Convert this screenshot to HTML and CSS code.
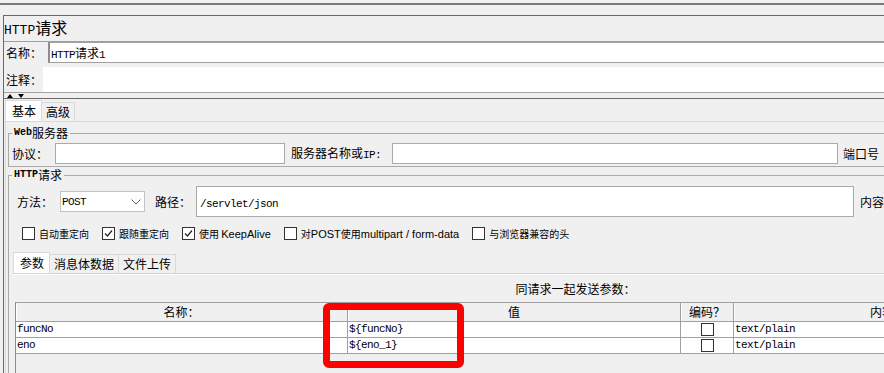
FILE: index.html
```html
<!DOCTYPE html>
<html lang="zh-CN">
<head>
    <meta charset="UTF-8">
    <meta name="viewport" content="width=device-width, initial-scale=1.0">
    <title>HTTP请求</title>
    <link rel="stylesheet" href="styles.css">
</head>
<body>
<div class="app">
    <div class="topbar"></div>
    <div class="panel">
        <div class="title"><span class="m">HTTP</span>请求</div>
        <div class="name-row">
            <span class="lbl">名称：</span>
            <div class="name-field"><span class="m">HTTP</span>请求<span class="m">1</span></div>
        </div>
        <div class="note-row">
            <span class="lbl">注释：</span>
            <div class="note"></div>
        </div>
        <div class="splitter">
            <svg width="20" height="4" viewBox="0 0 20 4"><polygon points="0,4 3,0 6,4" fill="#000"/><polygon points="11,0 17,0 14,4" fill="#000"/></svg>
        </div>
        <div class="tabs">
            <span class="tab on">基本</span>
            <span class="tab">高级</span>
        </div>
        <div class="pane">
            <fieldset class="group">
                <legend><span class="lg">Web</span>服务器</legend>
                <div class="row web-row">
                    <span>协议：</span>
                    <div class="input proto"></div>
                    <span class="host-lbl">服务器名称或<span class="m">IP:</span></span>
                    <div class="input host"></div>
                    <span class="port-lbl">端口号</span>
                    <div class="input port"></div>
                </div>
            </fieldset>
            <fieldset class="group">
                <legend><span class="lg">HTTP</span>请求</legend>
                <div class="row method-row">
                    <span>方法：</span>
                    <div class="select">
                        <span class="m">POST</span>
                        <svg width="10" height="6" viewBox="0 0 10 6"><polyline points="0.5,0.5 5,5 9.5,0.5" fill="none" stroke="#606060" stroke-width="1"/></svg>
                    </div>
                    <span class="path-lbl">路径：</span>
                    <div class="input path"><span class="m">/servlet/json</span></div>
                    <span class="enc-lbl">内容编码：</span>
                    <div class="input enc"></div>
                </div>
                <div class="checks">
                    <span class="check"><span class="box"></span><span>自动重定向</span></span>
                    <span class="check"><span class="box"><svg width="11" height="11" viewBox="0 0 11 11"><polyline points="2,5.5 4.5,8 9,2.5" fill="none" stroke="#222" stroke-width="1.2"/></svg></span><span>跟随重定向</span></span>
                    <span class="check"><span class="box"><svg width="11" height="11" viewBox="0 0 11 11"><polyline points="2,5.5 4.5,8 9,2.5" fill="none" stroke="#222" stroke-width="1.2"/></svg></span><span>使用 <span class="lat">KeepAlive</span></span></span>
                    <span class="check"><span class="box"></span><span>对<span class="lat">POST</span>使用<span class="lat">multipart / form-data</span></span></span>
                    <span class="check"><span class="box"></span><span>与浏览器兼容的头</span></span>
                </div>
                <div class="tabs inner">
                    <span class="tab on">参数</span>
                    <span class="tab">消息体数据</span>
                    <span class="tab">文件上传</span>
                </div>
                <div class="subpane">
                    <div class="caption">同请求一起发送参数：</div>
                    <div class="grid">
                        <div class="th">名称：</div>
                        <div class="th">值</div>
                        <div class="th">编码？</div>
                        <div class="th">内容类型：</div>
                        <div class="th">包含等于？</div>

                        <div class="td m">funcNo</div>
                        <div class="td m">${funcNo}</div>
                        <div class="td mid"><span class="box"></span></div>
                        <div class="td m">text/plain</div>
                        <div class="td mid"><span class="box"></span></div>

                        <div class="td m">eno</div>
                        <div class="td m">${eno_1}</div>
                        <div class="td mid"><span class="box"></span></div>
                        <div class="td m">text/plain</div>
                        <div class="td mid"><span class="box"></span></div>
                    </div>
                </div>
            </fieldset>
        </div>
    </div>
    <div class="mark"></div>
</div>
</body>
</html>
```

FILE: styles.css
```css
body {
    margin: 0;
    background-color: #f0f0f0;
    color: #000;
    font-family: "Noto Sans CJK SC", "Liberation Sans", sans-serif;
    font-size: 12px;
    line-height: 14px;
    overflow: hidden;
}
.app {
    position: relative;
    width: 1146px;
}
.m {
    font-family: "Liberation Mono", "Noto Sans CJK SC", monospace;
    font-size: 11px;
    letter-spacing: -0.6px;
}
.topbar {
    height: 3px;
    border-bottom: 2px solid #7b7b7b;
    margin-bottom: 10px;
}
.panel {
    margin-left: 3px;
    border-top: 1px solid #696969;
    border-left: 1px solid #696969;
}
.title {
    height: 25px;
    line-height: 22px;
    font-size: 16px;
}
.title .m {
    font-size: 13px;
    letter-spacing: 0;
}
.lbl {
    flex-shrink: 0;
    box-sizing: border-box;
    padding-left: 2px;
}
.name-row {
    display: flex;
    align-items: center;
    height: 21px;
    border-top: 1px solid #a0a0a0;
}
.name-row .lbl {
    width: 44px;
}
.name-field {
    flex: 1;
    box-sizing: border-box;
    height: 21px;
    line-height: 19px;
    padding-left: 1px;
    background-color: #fff;
    border: 1px solid #a0a0a0;
    border-left: 2px solid #8c8c8c;
}
.note-row {
    display: flex;
    align-items: center;
    padding-top: 4px;
    border-bottom: 1px solid #a0a0a0;
}
.note-row .lbl {
    width: 39px;
}
.note {
    flex: 1;
    height: 25px;
    background-color: #fff;
}
.splitter {
    display: flex;
    align-items: flex-end;
    height: 5px;
    padding-left: 3px;
    border-bottom: 1px solid #696969;
    overflow: hidden;
}
.splitter svg {
    display: block;
}

/* tabs */
.tabs {
    display: flex;
    align-items: flex-end;
    height: 22px;
    padding-left: 1px;
}
.tab {
    height: 19px;
    line-height: 18px;
    box-sizing: border-box;
    padding: 0 4px;
    border: 1px solid #d9d9d9;
    border-bottom: none;
    background-color: #f0f0f0;
}
.tab + .tab {
    border-left: none;
}
.tab.on {
    height: 21px;
    line-height: 20px;
    padding: 0 5px 0 6px;
    background-color: #fff;
}
.pane {
    margin-left: 1px;
    padding-left: 2px;
    border-top: 1px solid #d9d9d9;
    border-left: 1px solid #d9d9d9;
}

/* titled groups */
.group {
    margin: 5px 3px 0 0;
    padding: 4px 3px 2px 3px;
    border: 1px solid #a9a9a9;
    min-width: 0;
}
.group + .group {
    margin-top: 2px;
    padding-bottom: 0;
    height: 230px;
}
.group legend {
    display: flex;
    align-items: center;
    height: 12px;
    padding: 0 2px;
    font-size: 12px;
    line-height: 12px;
}
.lg {
    font-family: "Liberation Mono", monospace;
    font-size: 10px;
    font-weight: bold;
}
.row {
    display: flex;
    align-items: center;
    white-space: nowrap;
}
.row > span {
    flex-shrink: 0;
}
.input {
    flex-shrink: 0;
    box-sizing: border-box;
    height: 21px;
    background-color: #fff;
    border: 1px solid #a9a9a9;
}
.web-row {
    height: 21px;
}
.proto {
    width: 230px;
    margin-left: 7px;
}
.host-lbl {
    margin-left: 6px;
}
.host {
    width: 446px;
    margin-left: 11px;
}
.port-lbl {
    margin-left: 5px;
}
.port {
    width: 60px;
    margin-left: 10px;
}
.method-row {
    height: 31px;
    margin-top: 1px;
    padding-left: 5px;
}
.select {
    display: flex;
    align-items: center;
    justify-content: space-between;
    box-sizing: border-box;
    width: 85px;
    height: 21px;
    margin-left: 7px;
    padding: 0 3px 0 1px;
    background-color: #fff;
    border: 1px solid #c4c4c4;
}
.path-lbl {
    margin-left: 10px;
}
.path {
    width: 658px;
    height: 31px;
    margin-left: 5px;
    padding-left: 3px;
    line-height: 29px;
}
.enc-lbl {
    margin-left: 6px;
}
.enc {
    width: 80px;
    height: 31px;
    margin-left: 4px;
}

/* options */
.checks {
    display: flex;
    align-items: center;
    height: 13px;
    margin-top: 10px;
    padding-left: 10px;
    font-size: 10px;
    white-space: nowrap;
}
.check {
    display: flex;
    align-items: center;
    margin-right: 13px;
}
.lat {
    font-family: "Liberation Sans", sans-serif;
    font-size: 11px;
}
.box {
    display: inline-flex;
    align-items: center;
    justify-content: center;
    width: 13px;
    height: 13px;
    box-sizing: border-box;
    margin-right: 4px;
    background-color: #fff;
    border: 1px solid #333;
}
.tabs.inner {
    margin-top: 11px;
}

/* parameter table */
.subpane {
    margin: 0 1px;
    padding: 0 2px;
    border-top: 1px solid #d4d4d4;
    box-shadow: inset 0 1px #fff;
}
.caption {
    height: 18px;
    line-height: 18px;
    padding-top: 6px;
    margin-bottom: 4px;
    text-align: center;
}
.grid {
    display: grid;
    grid-template-columns: 332px 333px 53px 333px 69px;
    grid-auto-rows: 16px;
    grid-template-rows: 19px;
    height: 90px;
    border-top: 1px solid #a0a0a0;
    border-left: 1px solid #8a8a8a;
}
.th {
    box-sizing: border-box;
    line-height: 18px;
    text-align: center;
    background-color: #f0f0f0;
    border-right: 1px solid #a0a0a0;
    border-bottom: 1px solid #a0a0a0;
    box-shadow: inset 1px 0 #fff;
}
.td {
    box-sizing: border-box;
    line-height: 15px;
    padding-left: 1px;
    background-color: #fff;
    border-right: 1px solid #a0a0a0;
    border-bottom: 1px solid #a0a0a0;
}
.td.mid {
    display: flex;
    align-items: center;
    justify-content: center;
}
.td .box {
    margin-right: 0;
}

/* red annotation */
.mark {
    position: absolute;
    left: 323px;
    top: 303px;
    width: 141px;
    height: 65px;
    box-sizing: border-box;
    border: 7px solid #ff0000;
    border-radius: 6px;
}
```
